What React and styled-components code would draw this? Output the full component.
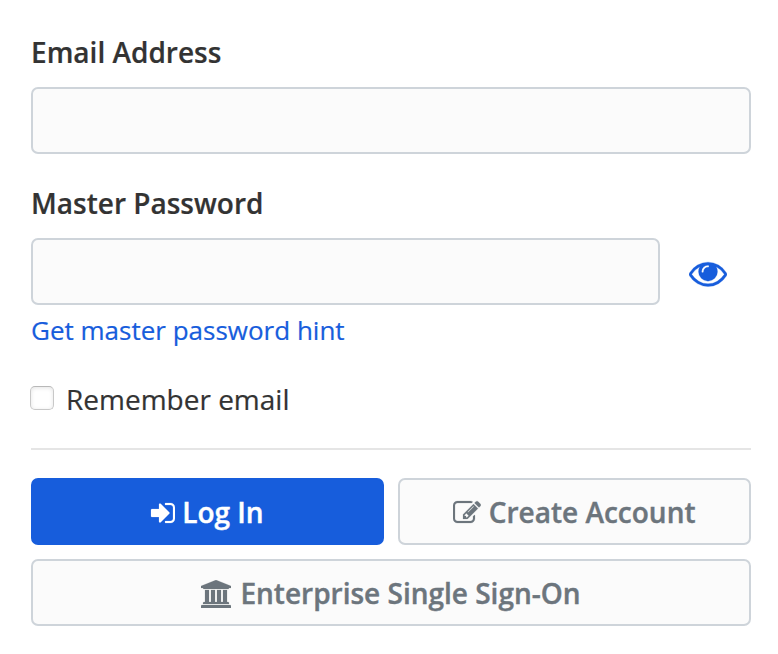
import styled, { createGlobalStyle } from "styled-components";

const GlobalStyle = createGlobalStyle`
  * {
    box-sizing: border-box;
  }

  body {
    margin: 0;
    background: #fff;
    color: #333;
    font-family: "Open Sans", sans-serif;
    font-size: 28px;
    -webkit-text-stroke: 0.2px currentColor;
  }
`;

const Form = styled.form`
  display: flex;
  flex-direction: column;
  width: 720px;
  margin-left: 31px;
  padding-top: 32px;
`;

const Label = styled.label`
  height: 40px;
  margin-bottom: 15px;
  line-height: 40px;
  font-weight: 600;
`;

const Input = styled.input`
  flex: 1;
  min-width: 0;
  height: 67px;
  padding: 0 22px;
  border: 2px solid #ced4da;
  border-radius: 7px;
  background: #fbfbfb;
  font: inherit;
`;

const Field = styled.div`
  display: flex;
  align-items: center;
  margin-bottom: ${(props) => props.$gap}px;
`;

const Toggle = styled.button`
  display: flex;
  margin: 3px 24px 0 29px;
  padding: 0;
  border: 0;
  background: none;
  color: #175ddc;
`;

const Icon = styled.svg`
  flex: none;
  fill: currentColor;
  stroke: currentColor;
  stroke-width: 12px;
`;

const Hint = styled.a`
  height: 36px;
  color: #175ddc;
  font-size: 26px;
  line-height: 36px;
`;

const Remember = styled.label`
  display: flex;
  align-items: center;
  gap: 12px;
  height: 40px;
  margin-top: 31px;
  margin-left: -1px;
`;

const Checkbox = styled.input`
  appearance: none;
  width: 24px;
  height: 24px;
  margin: 0 0 2px;
  border: 1px solid #c8c8c8;
  border-top-color: #b8b8b8;
  border-radius: 5px;
  background: #fff;
  box-shadow: inset 0 1px 4px rgba(0, 0, 0, 0.11);
`;

const Divider = styled.hr`
  width: 100%;
  height: 2px;
  margin: 29px 0 28px;
  border: 0;
  background: #e5e5e5;
`;

const Actions = styled.div`
  display: grid;
  grid-template-columns: 1fr 1fr;
  gap: 14px;
`;

const Button = styled.button`
  display: flex;
  align-items: center;
  justify-content: center;
  gap: ${(props) => (props.$wide ? 9 : 7.3)}px;
  grid-column: ${(props) => (props.$wide ? "1 / -1" : "auto")};
  height: 67px;
  padding: 0 ${(props) => (props.$primary ? 1.5 : 0)}px 0 0;
  border: 2px solid ${(props) => (props.$primary ? "#175ddc" : "#ced4da")};
  border-radius: 7px;
  background: ${(props) => (props.$primary ? "#175ddc" : "#fbfbfb")};
  color: ${(props) => (props.$primary ? "#fff" : "#6c757d")};
  font: inherit;
  font-weight: 600;
  -webkit-text-stroke: 0.4px currentColor;

  ${Icon} {
    margin-top: 3px;
  }
`;

const EyeIcon = () => (
  <Icon width="38" height="38" viewBox="0 0 1792 1792">
    <path d="M1664 960q-152-236-381-353 61 104 61 225 0 185-131.5 316.5t-316.5 131.5-316.5-131.5-131.5-316.5q0-121 61-225-229 117-381 353 133 205 333.5 326.5t434.5 121.5 434.5-121.5 333.5-326.5zm-720-384q0-20-14-34t-34-14q-125 0-214.5 89.5t-89.5 214.5q0 20 14 34t34 14 34-14 14-34q0-86 61-147t147-61q20 0 34-14t14-34zm848 384q0 34-20 69-140 230-376.5 368.5t-499.5 138.5-499.5-139-376.5-368q-20-35-20-69t20-69q140-229 376.5-368t499.5-139 499.5 139 376.5 368q20 35 20 69z" />
  </Icon>
);

const SignInIcon = () => (
  <Icon width="25" height="28" viewBox="64 0 1600 1792">
    <path d="M1312 896q0 26-19 45l-544 544q-19 19-45 19t-45-19-19-45v-288h-448q-26 0-45-19t-19-45v-384q0-26 19-45t45-19h448v-288q0-26 19-45t45-19 45 19l544 544q19 19 19 45zm352-352v704q0 119-84.5 203.5t-203.5 84.5h-320q-13 0-22.5-9.5t-9.5-22.5q0-4-1-20t-.5-26.5 3-23.5 10-19.5 20.5-6.5h320q66 0 113-47t47-113v-704q0-66-47-113t-113-47h-312l-11.5-1-11.5-3-8-5.5-7-9-2-13.5q0-4-1-20t-.5-26.5 3-23.5 10-19.5 20.5-6.5h320q119 0 203.5 84.5t84.5 203.5z" />
  </Icon>
);

const PencilIcon = () => (
  <Icon width="28" height="28" viewBox="0 0 1792 1792">
    <path d="M888 1184l116-116-152-152-116 116v56h96v96h56zm440-720q-16-16-33 1l-350 350q-17 17-1 33t33-1l350-350q17-17 1-33zm80 594v190q0 119-84.5 203.5t-203.5 84.5h-832q-119 0-203.5-84.5t-84.5-203.5v-832q0-119 84.5-203.5t203.5-84.5h832q63 0 117 25 15 7 18 23 3 17-9 29l-49 49q-14 14-32 8-23-6-45-6h-832q-66 0-113 47t-47 113v832q0 66 47 113t113 47h832q66 0 113-47t47-113v-126q0-13 9-22l64-64q15-15 35-7t20 29zm-96-738l288 288-672 672h-288v-288zm444 132l-92 92-288-288 92-92q28-28 68-28t68 28l152 152q28 28 28 68t-28 68z" />
  </Icon>
);

const BankIcon = () => (
  <Icon width="30" height="28" viewBox="0 0 1920 1792">
    <path d="M960 0l960 384v128h-128q0 26-20.5 45t-48.5 19h-1526q-28 0-48.5-19t-20.5-45h-128v-128zm-704 640h256v768h128v-768h256v768h128v-768h256v768h128v-768h256v768h59q28 0 48.5 19t20.5 45v64h-1664v-64q0-26 20.5-45t48.5-19h59v-768zm1595 960q28 0 48.5 19t20.5 45v128h-1920v-128q0-26 20.5-45t48.5-19h1782z" />
  </Icon>
);

const App = () => {
  return (
    <>
      <GlobalStyle />
      <Form>
        <Label htmlFor="email">Email Address</Label>
        <Field $gap={29}>
          <Input id="email" type="text" />
        </Field>
        <Label htmlFor="password">Master Password</Label>
        <Field $gap={7}>
          <Input id="password" type="password" />
          <Toggle type="button" aria-label="Toggle visibility">
            <EyeIcon />
          </Toggle>
        </Field>
        <Hint>Get master password hint</Hint>
        <Remember>
          <Checkbox type="checkbox" />
          Remember email
        </Remember>
        <Divider />
        <Actions>
          <Button type="button" $primary>
            <SignInIcon />
            Log In
          </Button>
          <Button type="button">
            <PencilIcon />
            Create Account
          </Button>
          <Button type="button" $wide>
            <BankIcon />
            Enterprise Single Sign-On
          </Button>
        </Actions>
      </Form>
    </>
  );
};

export default App;
